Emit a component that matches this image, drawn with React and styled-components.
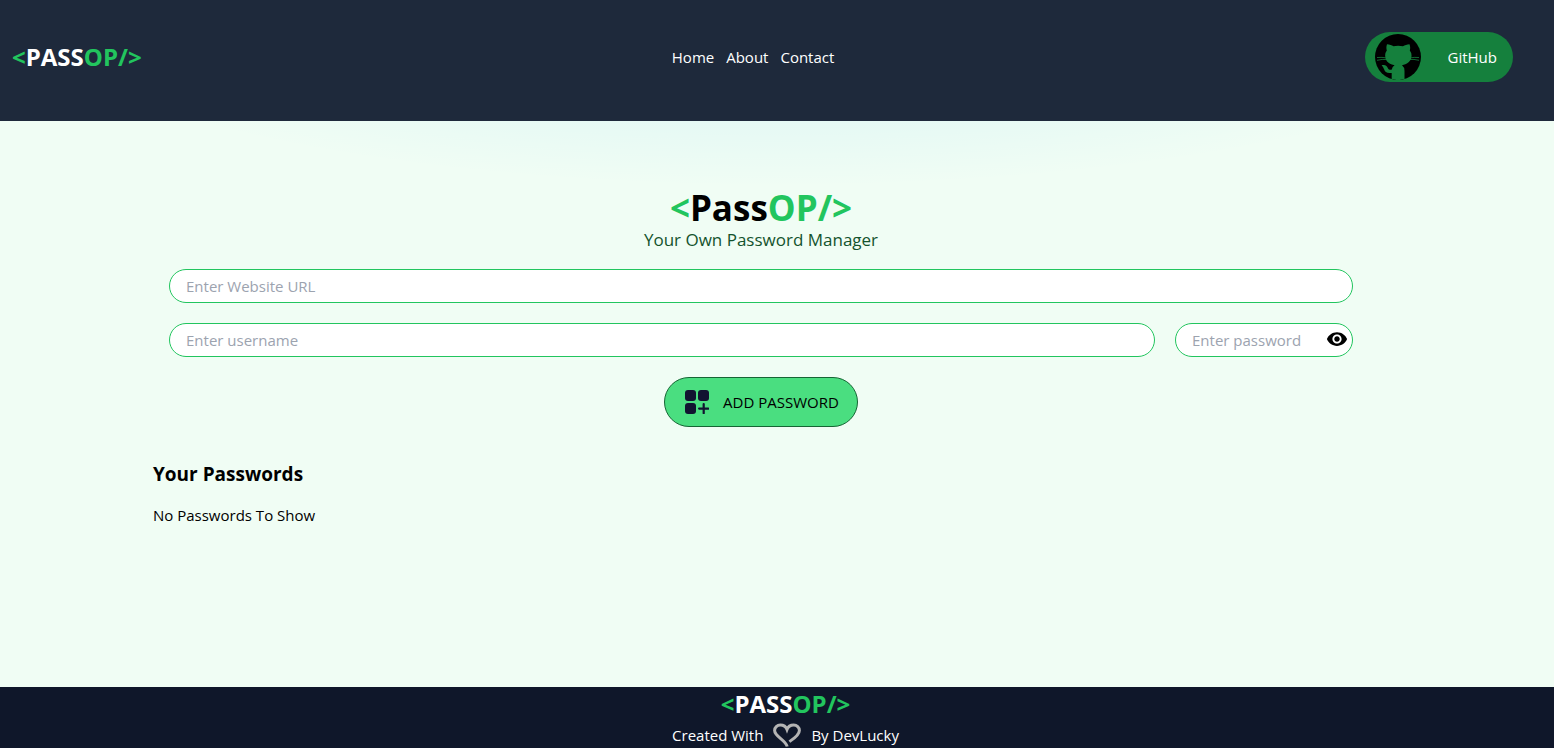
import React, { useState } from "react";
import styled, { createGlobalStyle } from "styled-components";

const GlobalStyle = createGlobalStyle`
  *, *::before, *::after { box-sizing: border-box; }
  body {
    margin: 0;
    color: #000;
    font-family: "Segoe UI", "Open Sans", "Noto Sans", sans-serif;
    font-size: 15px;
    line-height: 24px;
  }
  h1, h2, p, ul { margin: 0; padding: 0; }
  button, input { font: inherit; color: inherit; }
`;

const Page = styled.div`
  min-height: 100vh;
  display: flex;
  flex-direction: column;
  background:
    radial-gradient(100% 50% at 50% 0%, rgba(0, 163, 255, 0.13) 0, rgba(0, 163, 255, 0) 50%, rgba(0, 163, 255, 0) 100%),
    #f0fdf4;
`;

const Navbar = styled.nav`
  display: flex;
  justify-content: space-between;
  align-items: center;
  padding: 32px 41px 39px 12px;
  background: #1e293b;
  color: #fff;
`;

const Brand = styled.div`
  font-size: 24px;
  font-weight: 700;
  line-height: 32px;
  white-space: nowrap;
`;

const Title = styled.h1`
  font-size: 35px;
  font-weight: 700;
  line-height: 40px;
`;

const Accent = styled.span`
  color: #22c55e;
`;

const NavLinks = styled.ul`
  display: flex;
  gap: 12px;
  list-style: none;
`;

const NavLink = styled.a`
  color: inherit;
  text-decoration: none;
`;

const GitHubButton = styled.button`
  display: flex;
  align-items: center;
  gap: 27px;
  height: 50px;
  padding: 0 16px 0 10px;
  border: 0;
  border-radius: 25px;
  background: #15803d;
  color: #fff;
  cursor: pointer;
`;

const Main = styled.main`
  flex: 1;
  padding: 67px 185px 48px 153px;
`;

const Heading = styled.header`
  text-align: center;
`;

const Tagline = styled.p`
  color: #14532d;
  font-size: 17px;
  line-height: 24px;
`;

const Form = styled.form`
  display: flex;
  flex-direction: column;
  align-items: center;
  gap: 20px;
  padding: 17px 16px 0;
`;

const FieldRow = styled.div`
  display: flex;
  gap: 20px;
  width: 100%;
`;

const Field = styled.input`
  width: 100%;
  min-width: 0;
  height: 34px;
  padding: 4px 16px;
  border: 1px solid #22c55e;
  border-radius: 17px;
  background: #fff;
  outline-color: #15803d;
  &::placeholder { color: #9ca3af; opacity: 1; }
`;

const PasswordField = styled.div`
  position: relative;
  flex: 0 0 178px;
`;

const RevealButton = styled.button`
  position: absolute;
  top: 5px;
  right: 5px;
  display: flex;
  padding: 0;
  border: 0;
  background: none;
  cursor: pointer;
`;

const AddButton = styled.button`
  display: flex;
  align-items: center;
  gap: 14px;
  height: 50px;
  padding: 0 18px 0 20px;
  border: 1px solid #166534;
  border-radius: 25px;
  background: #4ade80;
  cursor: pointer;
`;

const Passwords = styled.section`
  padding-top: 32px;
`;

const SectionTitle = styled.h2`
  padding-bottom: 14px;
  font-size: 19px;
  font-weight: 700;
  line-height: 30px;
`;

const Footer = styled.footer`
  display: flex;
  flex-direction: column;
  align-items: center;
  padding: 1px 0 0 17px;
  background: #0f172a;
  color: #fff;
`;

const Credit = styled.p`
  display: flex;
  align-items: center;
  gap: 10px;
  height: 28px;
  padding-top: 2px;
`;

function GitHubIcon() {
  return (
    <svg width="46" height="46" viewBox="0 0 46 46" aria-hidden="true">
      <circle cx="23" cy="23" r="23" />
      <path
        fill="#15803d"
        d="M12 10.2C14.500 10.200 16.800 11.400 18.500 12.200Q23 11.200 28 12.200C29.800 11.300 32 10.200 34.500 10.200Q35.700 13.200 34.800 16.400Q36.800 18.800 36.500 22.300C36 28 31.600 30.400 27 31.200Q29.500 33 29.500 37V45.100Q23 47 16.700 45.100V38.900C11.800 39.600 10 37.800 9.200 35.400Q8.600 33.400 6.600 31.300C10.400 30.200 12 32.200 12.900 34.200C13.700 35.800 15.300 36.200 16.800 35.600Q17.200 32.600 19.600 31.200C14.800 30.500 10.700 28 10.200 22.300Q9.900 18.800 11.800 16.400Q10.900 13.200 12 10.200Z"
      />
      <path
        fill="none"
        stroke="#15803d"
        strokeWidth="0.8"
        d="M2 23.500Q7 23 12 24M2 26.300Q7 25 12.500 25.500M44 23.500Q39 23 34.500 24M44 26.300Q39 25 34 25.500"
      />
    </svg>
  );
}

function EyeIcon() {
  return (
    <svg width="22" height="22" viewBox="0 0 24 24" aria-hidden="true">
      <path d="M12 4.500C7 4.500 2.730 7.610 1 12c1.730 4.390 6 7.500 11 7.500s9.270-3.110 11-7.500c-1.730-4.390-6-7.500-11-7.500zM12 17c-2.760 0-5-2.240-5-5s2.240-5 5-5 5 2.240 5 5-2.240 5-5 5zm0-8c-1.660 0-3 1.340-3 3s1.340 3 3 3 3-1.340 3-3-1.340-3-3-3z" />
    </svg>
  );
}

function AddIcon() {
  return (
    <svg width="24" height="24" viewBox="0 0 24 24" fill="#121331" aria-hidden="true">
      <rect width="11" height="11" rx="3" />
      <rect x="13" width="11" height="11" rx="3" />
      <rect y="13" width="11" height="11" rx="3" />
      <path d="M18.700 14V23.200M14.100 18.600H23.300" stroke="#121331" strokeWidth="2.200" strokeLinecap="round" />
    </svg>
  );
}

function HeartIcon() {
  return (
    <svg width="28" height="24" viewBox="0 0 28 24" fill="none" stroke="#b4b4b4" strokeWidth="3" aria-hidden="true">
      <path d="M16.400 18.600C20.500 15.700 26.400 12 26.400 7.400C26.400 4.400 23.800 2 20.700 2C17.500 2 15 3.800 14 6.500C13 3.800 10.500 2 7.300 2C4.200 2 1.600 4.400 1.600 7.400C1.600 13.500 12.800 17 14.200 23.500" />
    </svg>
  );
}

function Logo() {
  return (
    <Brand>
      <Accent>&lt;</Accent>PASS<Accent>OP/&gt;</Accent>
    </Brand>
  );
}

export default function App() {
  const [visible, setVisible] = useState(false);

  return (
    <Page>
      <GlobalStyle />
      <Navbar>
        <Logo />
        <NavLinks>
          <li><NavLink href="#home">Home</NavLink></li>
          <li><NavLink href="#about">About</NavLink></li>
          <li><NavLink href="#contact">Contact</NavLink></li>
        </NavLinks>
        <GitHubButton type="button">
          <GitHubIcon />
          GitHub
        </GitHubButton>
      </Navbar>

      <Main>
        <Heading>
          <Title>
            <Accent>&lt;</Accent>Pass<Accent>OP/&gt;</Accent>
          </Title>
          <Tagline>Your Own Password Manager</Tagline>
        </Heading>
        <Form onSubmit={(e) => e.preventDefault()}>
          <Field type="text" name="site" aria-label="Website URL" placeholder="Enter Website URL" />
          <FieldRow>
            <Field type="text" name="username" aria-label="Username" placeholder="Enter username" />
            <PasswordField>
              <Field
                type={visible ? "text" : "password"}
                name="password"
                aria-label="Password"
                placeholder="Enter password"
              />
              <RevealButton type="button" aria-label="Show password" onClick={() => setVisible(!visible)}>
                <EyeIcon />
              </RevealButton>
            </PasswordField>
          </FieldRow>
          <AddButton type="submit">
            <AddIcon />
            ADD PASSWORD
          </AddButton>
        </Form>
        <Passwords>
          <SectionTitle>Your Passwords</SectionTitle>
          <p>No Passwords To Show</p>
        </Passwords>
      </Main>

      <Footer>
        <Logo />
        <Credit>
          <span>Created With</span>
          <HeartIcon />
          <span>By DevLucky</span>
        </Credit>
      </Footer>
    </Page>
  );
}
